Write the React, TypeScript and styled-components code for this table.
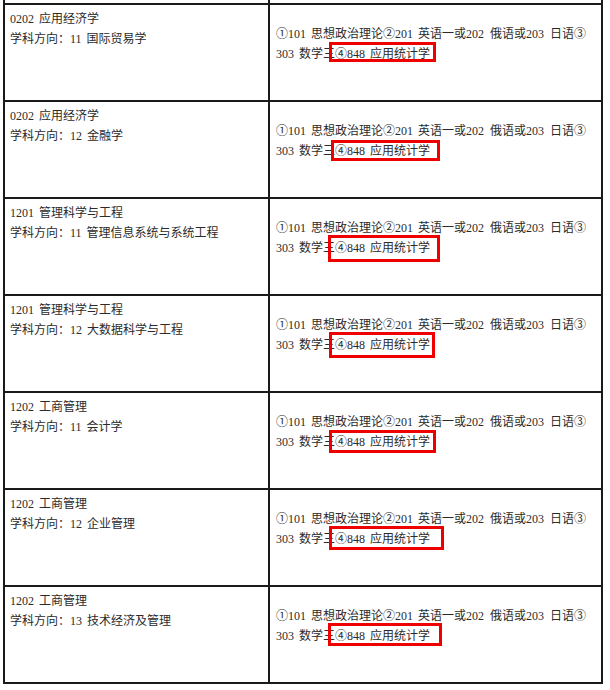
import React from "react";
import styled, { createGlobalStyle } from "styled-components";

const Global = createGlobalStyle`
  html, body { margin: 0; padding: 0; background: #ffffff; }
  body {
    font-family: "Liberation Serif", "Noto Sans CJK SC", serif;
    color: #2b2b2b;
  }
`;

const Table = styled.div`
  margin-left: 3px;
  width: 600px;
  border-left: 2px solid #1a1a1a;
  display: grid;
  grid-template-columns: 265px 333px;
`;

const Cell = styled.div`
  position: relative;
  box-sizing: border-box;
  border-right: 2px solid #1a1a1a;
  border-bottom: 2px solid #1a1a1a;
  font-size: 12px;
  line-height: 20px;
  white-space: nowrap;
`;

const Stub = styled(Cell)`
  height: 5px;
`;

const LeftCell = styled(Cell)`
  height: 97px;
  padding: 4px 0 0 5px;
`;

const RightCell = styled(Cell)`
  height: 97px;
  padding: 19px 0 0 6px;
`;

const Line = styled.div`
  display: block;
`;

const Gap = styled.span<{ $w?: number }>`
  display: inline-block;
  width: ${(p) => p.$w ?? 5}px;
`;

const Mark = styled.div<{ $x: number; $y: number; $w: number; $h: number }>`
  position: absolute;
  left: ${(p) => p.$x}px;
  top: ${(p) => p.$y}px;
  width: ${(p) => p.$w}px;
  height: ${(p) => p.$h}px;
  box-sizing: border-box;
  border: 3px solid #ee0000;
  pointer-events: none;
`;

type Row = {
  code: string;
  major: string;
  dir: string;
  name: string;
  box: [number, number, number, number];
};

const rows: Row[] = [
  { code: "0202", major: "应用经济学", dir: "11", name: "国际贸易学", box: [59, 37, 107, 20] },
  { code: "0202", major: "应用经济学", dir: "12", name: "金融学", box: [61, 38, 109, 21] },
  { code: "1201", major: "管理科学与工程", dir: "11", name: "管理信息系统与系统工程", box: [58, 36, 112, 27] },
  { code: "1201", major: "管理科学与工程", dir: "12", name: "大数据科学与工程", box: [59, 36, 106, 26] },
  { code: "1202", major: "工商管理", dir: "11", name: "会计学", box: [59, 37, 107, 23] },
  { code: "1202", major: "工商管理", dir: "12", name: "企业管理", box: [59, 36, 115, 24] },
  { code: "1202", major: "工商管理", dir: "13", name: "技术经济及管理", box: [58, 36, 114, 23] },
];

export default function App() {
  return (
    <>
      <Global />
      <Table>
        <Stub />
        <Stub />
        {rows.map((r, i) => (
          <React.Fragment key={i}>
            <LeftCell>
              <Line>
                {r.code}
                <Gap />
                {r.major}
              </Line>
              <Line>
                学科方向：{r.dir}
                <Gap />
                {r.name}
              </Line>
            </LeftCell>
            <RightCell>
              <Line>
                ①101<Gap />思想政治理论②201<Gap />英语一或202<Gap $w={6} />俄语或203<Gap $w={6} />日语③
              </Line>
              <Line>
                303<Gap />数学三④848<Gap />应用统计学
              </Line>
              <Mark $x={r.box[0]} $y={r.box[1]} $w={r.box[2]} $h={r.box[3]} />
            </RightCell>
          </React.Fragment>
        ))}
      </Table>
    </>
  );
}
